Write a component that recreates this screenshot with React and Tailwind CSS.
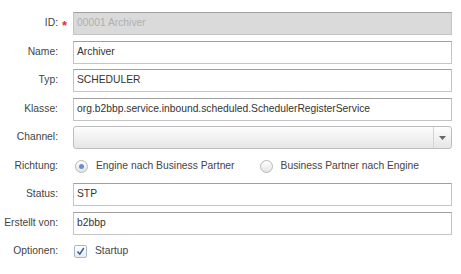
import React from "react";

const Label = ({ children, req }) => (
  <div className="w-[73px] shrink-0 flex items-center justify-end pr-[15px] relative text-[#444]">
    <span>{children}</span>
    {req && <span className="absolute right-[6px] top-[1px] text-[#e0303a] text-[13px] font-bold">*</span>}
  </div>
);

const Field = ({ value, disabled }) => (
  <div
    className={`w-[379px] h-[23px] border border-[#c4c4c4] border-t-[#a0a0a0] flex items-center pl-[3px] ${
      disabled ? "bg-[#dadada] text-[#b0b0b0]" : "bg-white text-[#333]"
    }`}
  >
    {value}
  </div>
);

const Row = ({ label, req, children }) => (
  <div className="flex h-[23px] items-center">
    <Label req={req}>{label}</Label>
    {children}
  </div>
);

const Radio = ({ checked }) => (
  <div className="w-[13px] h-[13px] rounded-full border border-[#b8b8b8] bg-gradient-to-b from-[#ffffff] to-[#e4e4e4] flex items-center justify-center">
    {checked && <div className="w-[5px] h-[5px] rounded-full bg-[#6b8fc9]" />}
  </div>
);

export default function App() {
  return (
    <div
      className="w-[461px] h-[274px] bg-white text-[10.3px] leading-none"
      style={{ fontFamily: '"Liberation Sans", Arial, sans-serif' }}
    >
      <div className="flex flex-col pt-[12px] gap-[5.5px]">
        <Row label="ID:" req>
          <Field value="00001 Archiver" disabled />
        </Row>
        <Row label="Name:">
          <Field value="Archiver" />
        </Row>
        <Row label="Typ:">
          <Field value="SCHEDULER" />
        </Row>
        <Row label="Klasse:">
          <Field value="org.b2bbp.service.inbound.scheduled.SchedulerRegisterService" />
        </Row>
        <Row label="Channel:">
          <div className="w-[379px] h-[23px] border border-[#bdbdbd] rounded-[3px] bg-gradient-to-b from-[#fdfdfd] to-[#e6e6e6] flex justify-end">
            <div className="w-[18px] h-full border-l border-[#d4d4d4] flex items-center justify-center">
              <svg width="7" height="4" viewBox="0 0 7 4">
                <path d="M0 0 L7 0 L3.5 4 Z" fill="#666" />
              </svg>
            </div>
          </div>
        </Row>
        <Row label="Richtung:">
          <div className="flex items-center text-[#444] pl-[2px]">
            <Radio checked />
            <span className="ml-[8px]">Engine nach Business Partner</span>
            <div className="ml-[25px]">
              <Radio />
            </div>
            <span className="ml-[8px]">Business Partner nach Engine</span>
          </div>
        </Row>
        <Row label="Status:">
          <Field value="STP" />
        </Row>
        <Row label="Erstellt von:">
          <Field value="b2bbp" />
        </Row>
        <Row label="Optionen:">
          <div className="flex items-center text-[#444] pl-[1px]">
            <div className="w-[13px] h-[13px] border border-[#a8b8cc] rounded-[2px] bg-gradient-to-b from-[#ffffff] to-[#e6ecf3] flex items-center justify-center">
              <svg width="9" height="9" viewBox="0 0 9 9">
                <path d="M1.5 4.5 L3.8 7.2 L7.8 1" fill="none" stroke="#2b5597" strokeWidth="1.4" />
              </svg>
            </div>
            <span className="ml-[8px]">Startup</span>
          </div>
        </Row>
      </div>
    </div>
  );
}
